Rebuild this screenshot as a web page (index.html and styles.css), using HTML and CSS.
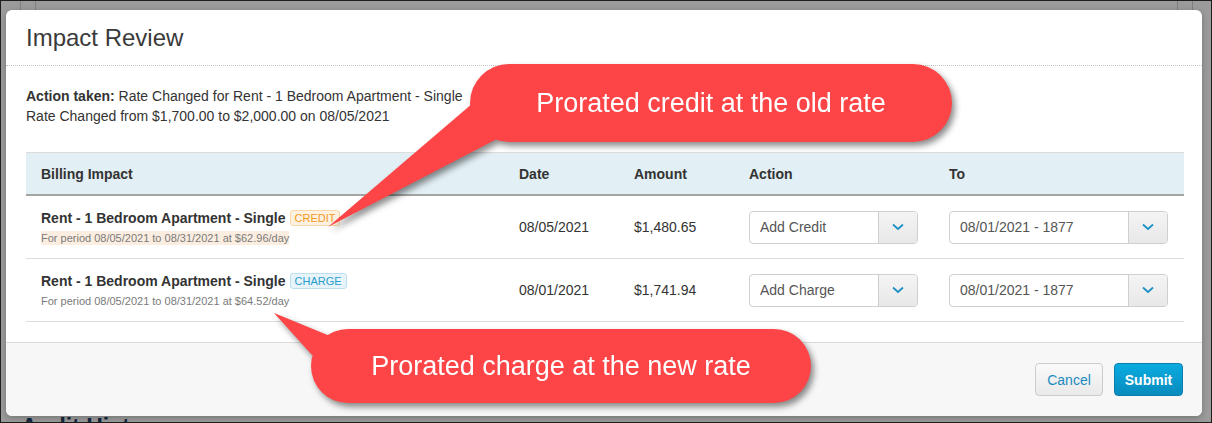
FILE: index.html
```html
<!DOCTYPE html>
<html lang="en">
<head>
<meta charset="utf-8">
<title>Impact Review</title>
<link rel="stylesheet" href="styles.css">
</head>
<body>
  <div class="page">
    <div class="page-strip">
      <div class="strip-cell"></div>
      <div class="strip-cell"></div>
    </div>
    <h2 class="page-title">Audit History</h2>
  </div>

  <div class="modal">
    <div class="modal-header">
      <h1 class="modal-title">Impact Review</h1>
    </div>
    <div class="modal-body">
      <p class="intro"><b>Action taken:</b> Rate Changed for Rent - 1 Bedroom Apartment - Single<br>Rate Changed from $1,700.00 to $2,000.00 on 08/05/2021</p>
      <div class="table">
        <div class="row head">
          <div class="cell">Billing Impact</div>
          <div class="cell">Date</div>
          <div class="cell">Amount</div>
          <div class="cell">Action</div>
          <div class="cell">To</div>
        </div>
        <div class="row">
          <div class="cell">
            <div class="item-name">Rent - 1 Bedroom Apartment - Single <span class="badge credit">CREDIT</span></div>
            <div class="item-sub"><span class="hl">For period 08/05/2021 to 08/31/2021 at $62.96/day</span></div>
          </div>
          <div class="cell">08/05/2021</div>
          <div class="cell">$1,480.65</div>
          <div class="cell sel-cell">
            <div class="select"><span class="select-text">Add Credit</span><span class="select-btn"><svg width="12" height="8" viewBox="0 0 12 8"><path d="M1 1.5 L6 6 L11 1.5" fill="none" stroke="#1a8fc4" stroke-width="1.7"/></svg></span></div>
          </div>
          <div class="cell sel-cell">
            <div class="select"><span class="select-text">08/01/2021 - 1877</span><span class="select-btn"><svg width="12" height="8" viewBox="0 0 12 8"><path d="M1 1.5 L6 6 L11 1.5" fill="none" stroke="#1a8fc4" stroke-width="1.7"/></svg></span></div>
          </div>
        </div>
        <div class="row">
          <div class="cell">
            <div class="item-name">Rent - 1 Bedroom Apartment - Single <span class="badge charge">CHARGE</span></div>
            <div class="item-sub">For period 08/05/2021 to 08/31/2021 at $64.52/day</div>
          </div>
          <div class="cell">08/01/2021</div>
          <div class="cell">$1,741.94</div>
          <div class="cell sel-cell">
            <div class="select"><span class="select-text">Add Charge</span><span class="select-btn"><svg width="12" height="8" viewBox="0 0 12 8"><path d="M1 1.5 L6 6 L11 1.5" fill="none" stroke="#1a8fc4" stroke-width="1.7"/></svg></span></div>
          </div>
          <div class="cell sel-cell">
            <div class="select"><span class="select-text">08/01/2021 - 1877</span><span class="select-btn"><svg width="12" height="8" viewBox="0 0 12 8"><path d="M1 1.5 L6 6 L11 1.5" fill="none" stroke="#1a8fc4" stroke-width="1.7"/></svg></span></div>
          </div>
        </div>
      </div>
    </div>
    <div class="modal-footer">
      <button class="btn btn-cancel">Cancel</button>
      <button class="btn btn-submit">Submit</button>
    </div>
  </div>

  <div class="callouts">
    <svg class="tails" width="1210" height="421" viewBox="0 0 1210 421">
      <polygon points="327,226 472,102 520,110 494,139" fill="#fd4446"/>
      <polygon points="273,312 329,335 345,360 311,354" fill="#fd4446"/>
    </svg>
    <div class="bubble bubble-1">Prorated credit at the old rate</div>
    <div class="bubble bubble-2">Prorated charge at the new rate</div>
  </div>
</body>
</html>
```

FILE: styles.css
```css
* { box-sizing: border-box; }

html, body { height: 100%; }

body {
  margin: 0;
  position: relative;
  border: 1px solid #1e1e1e;
  background: #9b9b9b;
  font-family: "Liberation Sans", Arial, sans-serif;
  overflow: hidden;
}

.page {
  padding: 0;
}

.page-strip {
  height: 9px;
  display: flex;
  justify-content: space-between;
  padding: 0 18px 0 19px;
}

.strip-cell {
  width: 16px;
  border-left: 1px solid #7f7f7f;
  border-right: 1px solid #7f7f7f;
}

.page-title {
  margin: 404px 0 0;
  padding-left: 20px;
  font-size: 23px;
  line-height: 26px;
  font-weight: bold;
  color: #15283f;
}

.modal {
  position: absolute;
  left: 5px;
  top: 9px;
  width: 1196px;
  background: #fff;
  border-radius: 6px;
  box-shadow: 0 2px 6px rgba(0,0,0,0.25);
  overflow: hidden;
}

.modal-header {
  padding: 15px 20px 14px;
  border-bottom: 1px dotted #c4c4c4;
}

.modal-title {
  margin: 0;
  font-size: 24px;
  line-height: 26px;
  font-weight: normal;
  color: #3a3a3a;
}

.modal-body {
  padding: 20px 18px 20px 20px;
}

.intro {
  margin: 0 0 26px;
  font-size: 14px;
  line-height: 20px;
  color: #333;
}

.table {
  border-top: 1px solid #dcdcdc;
}

.row {
  display: grid;
  grid-template-columns: 478px 115px 115px 200px 1fr;
  align-items: center;
  min-height: 63px;
  border-bottom: 1px solid #dcdcdc;
  font-size: 14px;
  color: #333;
}

.row.head {
  min-height: 42px;
  height: 43px;
  background: #e2eff4;
  border-bottom: 2px solid #a4a4a4;
  font-weight: bold;
}

.cell {
  padding: 0 15px;
}

.sel-cell {
  padding: 0 16px 0 15px;
}

.item-name {
  font-weight: bold;
  font-size: 14px;
  line-height: 20px;
  display: flex;
  align-items: center;
  gap: 4px;
}

.badge {
  display: inline-block;
  font-weight: normal;
  font-size: 11px;
  line-height: 14px;
  padding: 0 4px;
  border: 1px solid;
  border-radius: 3px;
}

.badge.credit {
  color: #f39a1c;
  background: #fdf1e1;
  border-color: #f9d8aa;
}

.badge.charge {
  color: #2a9dcf;
  background: #e7f4f9;
  border-color: #bcdfee;
}

.item-sub {
  margin-top: 2px;
  font-size: 11px;
  line-height: 16px;
  color: #7a7a7a;
}

.hl {
  background: #fbeee1;
  padding: 1px 0;
}

.select {
  display: flex;
  height: 33px;
  border: 1px solid #cfcfcf;
  border-radius: 4px;
  overflow: hidden;
  background: #fff;
}

.select-text {
  flex: 1;
  padding-left: 10px;
  line-height: 31px;
  font-size: 14px;
  color: #555;
}

.select-btn {
  width: 39px;
  border-left: 1px solid #cfcfcf;
  background: linear-gradient(#f4f4f4, #e8e8e8);
  display: flex;
  align-items: center;
  justify-content: center;
}

.modal-footer {
  border-top: 1px solid #dcdcdc;
  background: #f7f7f7;
  padding: 20px 19px 20px 20px;
  display: flex;
  justify-content: flex-end;
  gap: 11px;
}

.btn {
  height: 33px;
  border-radius: 4px;
  font-family: "Liberation Sans", Arial, sans-serif;
  font-size: 14px;
  cursor: pointer;
}

.btn-cancel {
  width: 68px;
  color: #1b8bc0;
  border: 1px solid #cccccc;
  background: linear-gradient(#fafafa, #e9e9e9);
}

.btn-submit {
  width: 69px;
  color: #fff;
  font-weight: bold;
  border: 1px solid #0a7fae;
  background: linear-gradient(#0aabe0, #0a8bbd);
}

.callouts {
  position: absolute;
  left: 0;
  top: 0;
  width: 1210px;
  height: 421px;
  filter: drop-shadow(3px 4px 3px rgba(0,0,0,0.45));
  pointer-events: none;
}

.tails {
  position: absolute;
  left: 0;
  top: 0;
}

.bubble {
  position: absolute;
  background: #fd4446;
  color: #fff;
  font-size: 27px;
  display: flex;
  align-items: center;
  justify-content: center;
  white-space: nowrap;
}

.bubble-1 {
  left: 469px;
  top: 63px;
  width: 482px;
  height: 78px;
  border-radius: 39px;
}

.bubble-2 {
  left: 310px;
  top: 328px;
  width: 500px;
  height: 74px;
  border-radius: 37px;
}
```
